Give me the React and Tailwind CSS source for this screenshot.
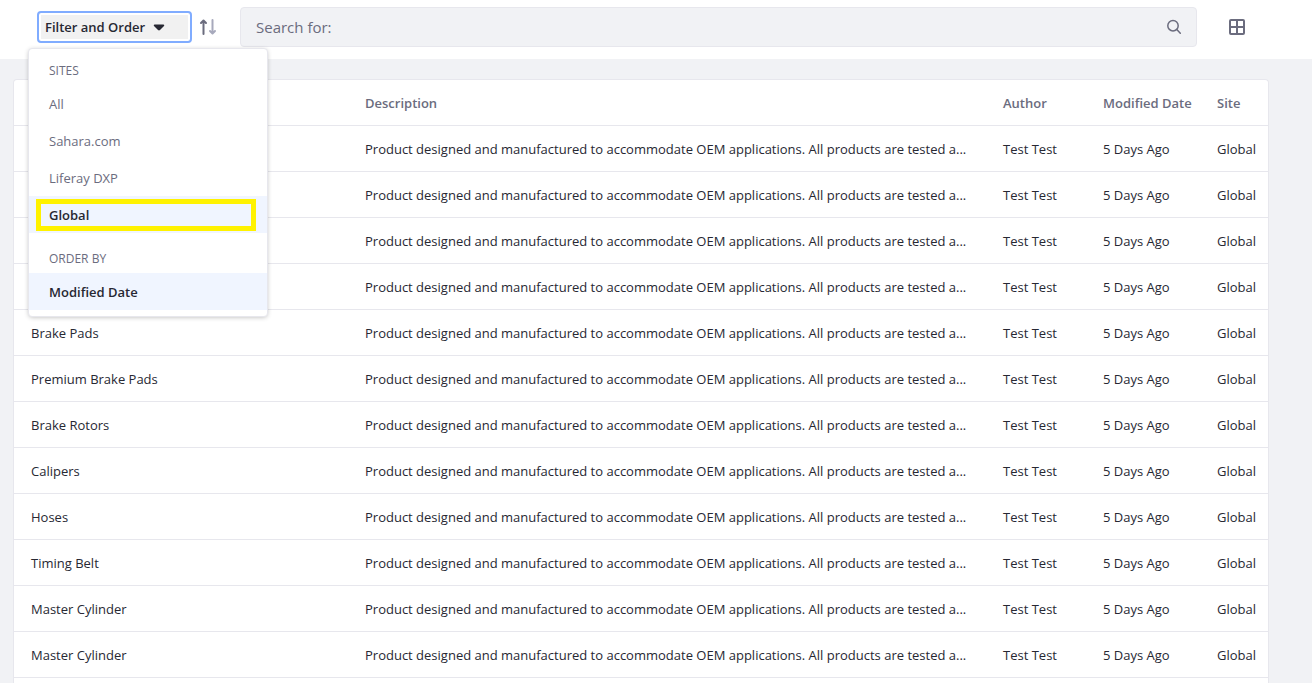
const products = [
  "",
  "",
  "",
  "",
  "Brake Pads",
  "Premium Brake Pads",
  "Brake Rotors",
  "Calipers",
  "Hoses",
  "Timing Belt",
  "Master Cylinder",
  "Master Cylinder",
];

const description =
  "Product designed and manufactured to accommodate OEM applications. All products are tested a...";

const sites = ["All", "Sahara.com", "Liferay DXP", "Global"];

function CaretIcon() {
  return (
    <svg width="12" height="7" viewBox="0 0 12 7" fill="currentColor" aria-hidden="true">
      <path d="M1.6 0.5h8.8c.8 0 1.1.8.6 1.4L7 6.1c-.6.6-1.4.6-2 0L1 1.9C.5 1.3.8.5 1.6.5z" />
    </svg>
  );
}

function OrderIcon() {
  return (
    <svg width="18" height="16" viewBox="0 0 18 16" fill="none" strokeWidth="2" strokeLinecap="round" strokeLinejoin="round" aria-hidden="true">
      <path className="stroke-[#6b6c7e]" d="M4.5 15V2M2 4l2.5-2.5L7 4" />
      <path className="stroke-[#a7a9bc]" d="M13.5 1v13M11 12l2.5 2.5L16 12" />
    </svg>
  );
}

function SearchIcon() {
  return (
    <svg width="16" height="16" viewBox="0 0 16 16" fill="none" stroke="currentColor" strokeWidth="1.5" strokeLinecap="round" aria-hidden="true">
      <circle cx="7" cy="6.7" r="5.2" />
      <path d="M10.8 10.5L14.3 14.3" />
    </svg>
  );
}

function CardsIcon() {
  return (
    <svg width="16" height="16" viewBox="0 0 16 16" fill="none" stroke="currentColor" strokeWidth="2" aria-hidden="true">
      <rect x="1" y="1" width="14" height="14" rx="1" />
      <path d="M8 1v14M1 8h14" />
    </svg>
  );
}

function MenuItem({ label, active, highlighted }) {
  return (
    <li className="relative">
      <button
        type="button"
        className={
          active
            ? "block h-[37px] w-full bg-[#f0f5ff] px-5 pt-0.5 text-left font-semibold text-[#272833]"
            : "block h-[37px] w-full px-5 pt-0.5 text-left text-[#6b6c7e]"
        }
      >
        {label}
      </button>
      {highlighted && (
        <span className="pointer-events-none absolute top-[3px] right-[11px] bottom-[2px] left-[7px] border-5 border-[#fff200]" />
      )}
    </li>
  );
}

function FilterMenu() {
  return (
    <div className="absolute top-[37px] left-[-9px] z-10 w-60 rounded border border-[#e7e7ed] bg-white pt-[7px] pb-1.5 text-[13px] shadow-[0_1px_5px_-1px_rgba(0,0,0,0.3)]">
      <h2 className="h-[29px] px-5 text-xs leading-[29px] text-[#6b6c7e]">SITES</h2>
      <ul>
        {sites.map((site) => (
          <MenuItem key={site} label={site} active={site === "Global"} highlighted={site === "Global"} />
        ))}
      </ul>
      <h2 className="mt-[11px] h-[29px] px-5 text-xs leading-[29px] text-[#6b6c7e]">ORDER BY</h2>
      <ul>
        <MenuItem label="Modified Date" active />
      </ul>
    </div>
  );
}

export default function App() {
  return (
    <div className="flex h-screen flex-col overflow-hidden bg-[#f1f2f5] font-['Segoe_UI','Open_Sans','Noto_Sans',sans-serif] text-[13px] text-[#272833]">
      <header className="flex h-[59px] shrink-0 items-start bg-white pt-[7px] pr-[67px] pl-[37px]">
        <div className="relative mt-1 w-[155px]">
          <button
            type="button"
            aria-expanded="true"
            className="flex h-8 w-full items-center gap-2 rounded border-2 border-[#80acff] bg-[#f1f1f1] pt-px pl-1.5 font-semibold shadow-[inset_0_0_0_2px_white]"
          >
            Filter and Order
            <CaretIcon />
          </button>
          <FilterMenu />
        </div>
        <button type="button" aria-label="Reverse order" className="ml-[7px] flex h-10 items-center">
          <OrderIcon />
        </button>
        <form role="search" className="ml-[23px] flex h-10 flex-1 items-center rounded border border-[#e7e7ed] bg-[#f1f2f5] pr-3.5 pl-[15px] text-[#6b6c7e]">
          <input
            type="text"
            aria-label="Search for"
            placeholder="Search for:"
            className="min-w-0 flex-1 bg-transparent text-[15px] outline-none placeholder:text-[#6b6c7e]"
          />
          <button type="submit" aria-label="Search">
            <SearchIcon />
          </button>
        </form>
        <button type="button" aria-label="Card view" className="ml-8 flex h-10 items-center text-[#6b6c7e]">
          <CardsIcon />
        </button>
      </header>
      <main className="flex min-h-0 flex-1 flex-col pt-5 pr-[43px] pl-[13px]">
        <div className="flex-1 rounded-t border border-b-0 border-[#e7e7ed] bg-white">
          <table className="w-full table-fixed text-left whitespace-nowrap">
            <colgroup>
              <col />
              <col className="w-[638px]" />
              <col className="w-[100px]" />
              <col className="w-[114px]" />
              <col className="w-[51px]" />
            </colgroup>
            <thead>
              <tr className="h-[45px] border-b border-[#e7e7ed] text-[#6b6c7e]">
                <th aria-label="Title" />
                <th className="pt-[3px] font-semibold">Description</th>
                <th className="pt-[3px] font-semibold">Author</th>
                <th className="pt-[3px] font-semibold">Modified Date</th>
                <th className="pt-[3px] font-semibold">Site</th>
              </tr>
            </thead>
            <tbody>
              {products.map((name, i) => (
                <tr key={i} className="h-[46px] border-b border-[#e7e7ed]">
                  <td className="pt-[3px] pl-[17px]">{name}</td>
                  <td className="pt-[3px]">{description}</td>
                  <td className="pt-[3px]">Test Test</td>
                  <td className="pt-[3px]">5 Days Ago</td>
                  <td className="pt-[3px]">Global</td>
                </tr>
              ))}
            </tbody>
          </table>
        </div>
      </main>
    </div>
  );
}
